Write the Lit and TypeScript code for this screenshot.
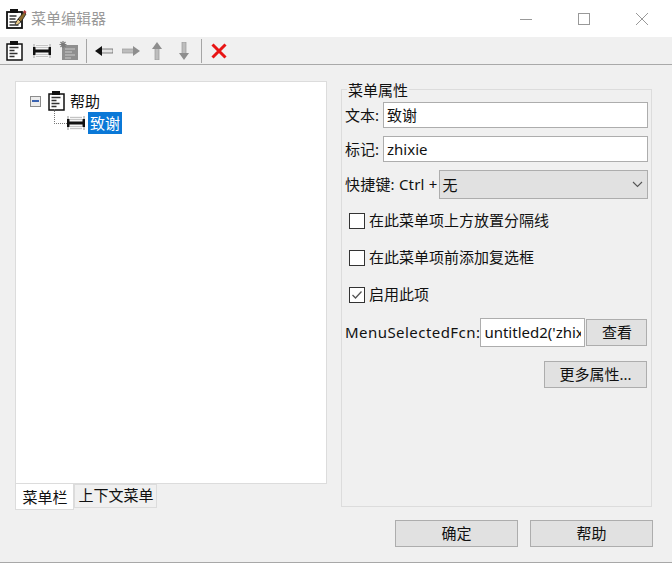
import { LitElement, html, css, svg } from "lit";
import { customElement } from "lit/decorators.js";

const pageIcon = svg`<svg width="17" height="20" viewBox="0 0 17 20">
<rect x="1" y="3" width="15" height="16" fill="#fff" stroke="#111" stroke-width="1.500"/>
<rect x="4" y="0" width="8" height="4" fill="#111"/>
<path d="M3.500 6.500h9M3.500 9.500h5M3.500 12.500h8M3.500 15.500h5" stroke="#333" stroke-width="1.500"/></svg>`;
const itemIcon = svg`<svg width="18" height="16" viewBox="0 0 18 16">
<rect x="3" y="1" width="12" height="14" fill="#f4f4f4"/>
<path d="M3 2.500h12M3 4.500h12M3 11.500h12M3 13.500h12" stroke="#c4c4c4"/>
<path d="M1 1v14M17 1v14" stroke="#c8c8c8" stroke-width="2"/>
<rect x="0" y="4" width="2.500" height="8" fill="#111"/><rect x="15.500" y="4" width="2.500" height="8" fill="#111"/>
<rect x="0" y="6.500" width="18" height="3" fill="#111"/></svg>`;
const addIcon = svg`<svg width="20" height="20" viewBox="0 0 20 20">
<rect x="3" y="4" width="16" height="15" fill="#8f8f8f"/><path d="M6 8h10M6 11h7M6 14h10M6 17h6" stroke="#b8b8b8" stroke-width="1.300"/>
<path d="M4 0v7M0.500 3.500h7M1.500 1l5 5M6.500 1l-5 5" stroke="#7a7a7a" stroke-width="1.200"/></svg>`;
const leftIcon = svg`<svg width="18" height="12" viewBox="0 0 18 12"><rect x="6" y="4" width="12" height="4" fill="#e4e4e4" stroke="#555" stroke-width=".7"/><path d="M0 6l7-5v10z" fill="#111"/></svg>`;
const rightIcon = svg`<svg width="18" height="12" viewBox="0 0 18 12"><rect x="0" y="4" width="12" height="4" fill="#bdbdbd" stroke="#999" stroke-width=".7"/><path d="M18 6l-7-5v10z" fill="#8e8e8e"/></svg>`;
const upIcon = svg`<svg width="12" height="18" viewBox="0 0 12 18"><rect x="4" y="6" width="4" height="12" fill="#bdbdbd" stroke="#999" stroke-width=".7"/><path d="M6 0l5 7H1z" fill="#8e8e8e"/></svg>`;
const downIcon = svg`<svg width="12" height="18" viewBox="0 0 12 18"><rect x="4" y="0" width="4" height="12" fill="#bdbdbd" stroke="#999" stroke-width=".7"/><path d="M6 18l5-7H1z" fill="#8e8e8e"/></svg>`;
const xIcon = svg`<svg width="16" height="16" viewBox="0 0 16 16"><path d="M1.500 1.500l13 13M14.500 1.500l-13 13" stroke="#e81414" stroke-width="3"/></svg>`;
const appIcon = svg`<svg width="21" height="20" viewBox="0 0 21 20">
<rect x="1" y="3" width="15" height="16" fill="#fff" stroke="#111" stroke-width="1.800"/><rect x="4" y="0" width="8" height="4" fill="#111"/>
<path d="M3.500 7h7M3.500 10h6M3.500 13h9M3.500 16h9" stroke="#333" stroke-width="1.500"/>
<path d="M9 15l3-5 3 3-4 3z" fill="#e8c98a" stroke="#222" stroke-width=".8"/>
<path d="M12 10l6-7 2 2-5 8z" fill="#8a6a2c" stroke="#222" stroke-width=".8"/><path d="M17 3l1.500-2 2 2-1.500 2z" fill="#b03a3a"/></svg>`;

@customElement("app-root")
export class AppRoot extends LitElement {
  static styles = css`
    :host { display: flex; flex-direction: column; width: 672px; height: 563px; background: #f0f0f0; font: 15px/20px "Noto Sans", "Noto Sans CJK SC", sans-serif; color: #111; overflow: hidden; box-sizing: border-box; border-bottom: 1px solid #a8a8a8; }
    .title { height: 37px; flex: none; background: #fff; display: flex; align-items: center; padding-left: 6px; gap: 4px; color: #999; }
    .title .name { flex: 1; padding-bottom: 2px; }
    .wc { display: flex; align-items: center; padding: 0 23px 0 0; gap: 44px; }
    .tb { height: 27px; flex: none; display: flex; align-items: center; border-bottom: 1px solid #a9a9a9; box-sizing: content-box; padding-left: 6px; }
    .tb svg { display: block; flex: none; }
    .m10 { margin-left: 10px; }
    .m8 { margin-left: 8px; }
    .m9 { margin-left: 9px; }
    .m7 { margin-left: 7px; }
    .m15 { margin-left: 15px; }
    .m11 { margin-left: 11px; }
    .sep { width: 1px; height: 24px; background: #a5a5a5; flex: none; }
    .main { flex: 1; display: grid; grid-template-columns: 312px 311px; column-gap: 14px; padding: 16px 0 0 15px; align-items: start; }
    .left { display: flex; flex-direction: column; }
    .tree { height: 403px; background: #fff; border: 1px solid #dcdcdc; box-sizing: border-box; padding: 8px 0 0 14px; }
    .row { display: flex; align-items: center; height: 22px; position: relative; }
    .plus { width: 11px; height: 11px; border: 1px solid #8c8c8c; background: #ececec; box-sizing: border-box; display: flex; align-items: center; justify-content: center; margin-right: 7px; flex: none; }
    .plus i { display: block; width: 7px; height: 1.500px; background: #3a62b0; }
    .row .lbl { margin-left: 5px; }
    .child { padding-left: 24px; }
    .elbow { width: 13px; height: 15px; margin-top: -14px; border-left: 1px dotted #777; border-bottom: 1px dotted #777; box-sizing: border-box; flex: none; }
    .sel { background: #0a78d7; color: #fff; height: 22px; line-height: 22px; margin-left: 3px; padding: 0 2px; }
    .tabs { display: flex; align-items: flex-start; }
    .tab { background: #fff; border: 1px solid #dcdcdc; border-top: 0; height: 26px; width: 59px; box-sizing: border-box; text-align: center; line-height: 27px; padding-left: 1px; }
    .tab.off { background: #f0f0f0; border-top: 1px solid #dcdcdc; height: 24px; width: 83px; line-height: 21px; padding-left: 1px; }
    .group { margin-top: 8px; height: 418px; border: 1px solid #dcdcdc; box-sizing: border-box; padding: 0 3px; position: relative; display: flex; flex-direction: column; }
    .legend { position: absolute; top: -10px; left: 5px; background: #f0f0f0; padding: 0 1px; }
    .f { display: flex; align-items: center; white-space: nowrap; }
    .t1 { padding-top: 12px; }
    .f > span.txt { padding-bottom: 1px; }
    input { font: inherit; color: inherit; box-sizing: border-box; border: 1px solid #adadad; background: #fff; height: 26px; padding: 0 3px 1px; outline: 0; min-width: 0; }
    .wide { width: 265px; margin-left: 4px; }
    .f2 { margin-top: 8px; }
    .f3 { margin-top: 8px; }
    .ctrl { letter-spacing: .2px; }
    .combo { flex: 1; height: 29px; margin-left: 1px; background: #e1e1e1; border: 1px solid #adadad; box-sizing: border-box; display: flex; align-items: center; justify-content: space-between; padding: 0 4px 0 3px; }
    .check { margin-left: 4px; gap: 4px; }
    .box { width: 16px; height: 16px; border: 1px solid #333; background: #fff; box-sizing: border-box; display: flex; flex: none; }
    .c1 { margin-top: 11px; }
    .c2 { margin-top: 16px; }
    .fn { margin-top: 13px; }
    .fnl { letter-spacing: .45px; }
    .fn input { width: 105px; height: 29px; }
    button { font: inherit; color: inherit; background: #e1e1e1; border: 1px solid #adadad; box-sizing: border-box; padding: 0 0 2px; }
    .fn button { width: 61px; height: 27px; margin-left: 1px; }
    .more { align-self: flex-end; width: 103px; height: 27px; margin: 14px 1px 0 0; }
    .foot { display: flex; justify-content: flex-end; gap: 12px; padding: 0 19px 15px 0; height: 27px; flex: none; }
    .foot button { width: 123px; height: 27px; }
  `;
  render() {
    return html`
      <div class="title">${appIcon}<span class="name">菜单编辑器</span>
        <div class="wc">
          <svg width="14" height="14" viewBox="0 0 14 14"><path d="M1 7.500h12" stroke="#999"/></svg>
          <svg width="14" height="14" viewBox="0 0 14 14"><rect x="1.500" y="1.500" width="11" height="11" fill="none" stroke="#999"/></svg>
          <svg width="14" height="14" viewBox="0 0 14 14"><path d="M1 1l12 12M13 1L1 13" stroke="#999"/></svg>
        </div>
      </div>
      <div class="tb">
        ${pageIcon}
        <span class="m10">${itemIcon}</span>
        <span class="m8">${addIcon}</span>
        <span class="sep m7"></span>
        <span class="m8">${leftIcon}</span>
        <span class="m9">${rightIcon}</span>
        <span class="m11">${upIcon}</span>
        <span class="m15">${downIcon}</span>
        <span class="sep m11"></span>
        <span class="m9">${xIcon}</span>
      </div>
      <div class="main">
        <div class="left">
          <div class="tree">
            <div class="row"><span class="plus"><i></i></span>${pageIcon}<span class="lbl">帮助</span></div>
            <div class="row child"><span class="elbow"></span>${itemIcon}<span class="sel">致谢</span></div>
          </div>
          <div class="tabs"><div class="tab">菜单栏</div><div class="tab off">上下文菜单</div></div>
        </div>
        <div class="group">
          <span class="legend">菜单属性</span>
          <div class="f t1"><span class="txt">文本:</span><input class="wide" .value=${"致谢"} /></div>
          <div class="f f2"><span class="txt">标记:</span><input class="wide" .value=${"zhixie"} /></div>
          <div class="f f3"><span class="txt ctrl">快捷键: Ctrl +</span><div class="combo"><span>无</span>
            <svg width="11" height="7" viewBox="0 0 11 7"><path d="M1 1l4.500 4.500L10 1" fill="none" stroke="#555" stroke-width="1.100"/></svg></div></div>
          <div class="f check c1"><span class="box"></span><span class="txt">在此菜单项上方放置分隔线</span></div>
          <div class="f check c2"><span class="box"></span><span class="txt">在此菜单项前添加复选框</span></div>
          <div class="f check c2"><span class="box"><svg width="14" height="14" viewBox="0 0 14 14"><path d="M2.500 7l3 3 6-6.500" fill="none" stroke="#555" stroke-width="1.300"/></svg></span><span class="txt">启用此项</span></div>
          <div class="f fn"><span class="txt fnl">MenuSelectedFcn:</span><input .value=${"untitled2('zhixie')"} /><button>查看</button></div>
          <button class="more">更多属性...</button>
        </div>
      </div>
      <div class="foot"><button>确定</button><button>帮助</button></div>
    `;
  }
}
